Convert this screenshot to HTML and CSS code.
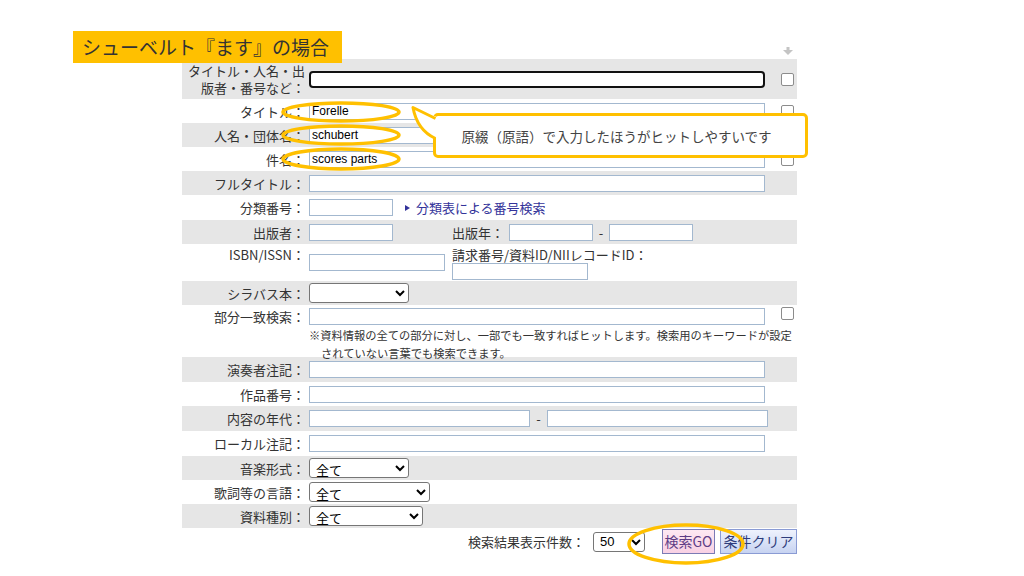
FILE: index.html
```html
<!DOCTYPE html>
<html lang="ja">
<head>
<meta charset="utf-8">
<title>シューベルト『ます』の場合</title>
<link rel="stylesheet" href="styles.css">
</head>
<body>
<div class="slide">
  <div class="form">
    <div class="topbar">
      <svg class="sort-icon" width="10" height="8" viewBox="0 0 10 8"><rect x="3.5" y="0" width="3" height="3" fill="#c4c4c4"/><polygon points="0,3 10,3 5,8" fill="#c4c4c4"/></svg>
    </div>

    <div class="row gray h40">
      <div class="lbl">タイトル・人名・出版者・番号など：</div>
      <div class="fld"><input class="txt w456 focus" type="text"></div>
      <div class="chk"><input class="cb" type="checkbox"></div>
    </div>
    <div class="row">
      <div class="lbl">タイトル：</div>
      <div class="fld"><input class="txt w456" type="text" value="Forelle"></div>
      <div class="chk"><input class="cb" type="checkbox"></div>
    </div>
    <div class="row gray">
      <div class="lbl">人名・団体名：</div>
      <div class="fld"><input class="txt w456" type="text" value="schubert"></div>
      <div class="chk"><input class="cb" type="checkbox"></div>
    </div>
    <div class="row">
      <div class="lbl">件名：</div>
      <div class="fld"><input class="txt w456" type="text" value="scores parts"></div>
      <div class="chk"><input class="cb" type="checkbox"></div>
    </div>
    <div class="row gray">
      <div class="lbl">フルタイトル：</div>
      <div class="fld"><input class="txt w456" type="text"></div>
      <div class="chk"></div>
    </div>
    <div class="row h25">
      <div class="lbl">分類番号：</div>
      <div class="fld">
        <input class="txt w84" type="text">
        <span class="link"><span class="tri"></span>分類表による番号検索</span>
      </div>
      <div class="chk"></div>
    </div>
    <div class="row gray">
      <div class="lbl">出版者：</div>
      <div class="fld">
        <input class="txt w84" type="text">
        <span class="sublbl pubyear">出版年：</span>
        <input class="txt w84" type="text">
        <span class="dash">-</span>
        <input class="txt w84" type="text">
      </div>
      <div class="chk"></div>
    </div>
    <div class="row h37 top">
      <div class="lbl pad2">ISBN/ISSN：</div>
      <div class="fld top">
        <input class="txt w136 isbn" type="text">
        <div class="callno">
          <div class="sublbl callno-lbl">請求番号/資料ID/NIIレコードID：</div>
          <input class="txt w136" type="text">
        </div>
      </div>
      <div class="chk"></div>
    </div>
    <div class="row gray">
      <div class="lbl">シラバス本：</div>
      <div class="fld"><select class="sel w100"><option></option></select></div>
      <div class="chk"></div>
    </div>
    <div class="row h52 top">
      <div class="lbl pad3">部分一致検索：</div>
      <div class="fld col">
        <input class="txt w456 mt3" type="text">
        <div class="note">
          <span class="note-line">※資料情報の全ての部分に対し、一部でも一致すればヒットします。検索用のキーワードが設定</span>
          <span class="note-line indent">されていない言葉でも検索できます。</span>
        </div>
      </div>
      <div class="chk mt2"><input class="cb" type="checkbox"></div>
    </div>
    <div class="row gray h25">
      <div class="lbl">演奏者注記：</div>
      <div class="fld"><input class="txt w456" type="text"></div>
      <div class="chk"></div>
    </div>
    <div class="row">
      <div class="lbl">作品番号：</div>
      <div class="fld"><input class="txt w456" type="text"></div>
      <div class="chk"></div>
    </div>
    <div class="row gray h25">
      <div class="lbl">内容の年代：</div>
      <div class="fld">
        <input class="txt w221" type="text">
        <span class="dash wide">-</span>
        <input class="txt w221" type="text">
      </div>
      <div class="chk"></div>
    </div>
    <div class="row h25">
      <div class="lbl">ローカル注記：</div>
      <div class="fld"><input class="txt w456" type="text"></div>
      <div class="chk"></div>
    </div>
    <div class="row gray">
      <div class="lbl">音楽形式：</div>
      <div class="fld"><select class="sel w100"><option>全て</option></select></div>
      <div class="chk"></div>
    </div>
    <div class="row">
      <div class="lbl">歌詞等の言語：</div>
      <div class="fld"><select class="sel w121"><option>全て</option></select></div>
      <div class="chk"></div>
    </div>
    <div class="row gray">
      <div class="lbl">資料種別：</div>
      <div class="fld"><select class="sel w114"><option>全て</option></select></div>
      <div class="chk"></div>
    </div>

    <div class="actions">
      <span class="count-lbl">検索結果表示件数：</span>
      <select class="sel w52"><option>50</option></select>
      <button class="btn go" type="button">検索GO</button>
      <button class="btn clear" type="button">条件クリア</button>
    </div>
  </div>

  <div class="badge">シューベルト『ます』の場合</div>
  <div class="callout">原綴（原語）で入力したほうがヒットしやすいです</div>

  <svg class="marks" width="1024" height="576" viewBox="0 0 1024 576">
    <path d="M438 117.5 L413 107.5 Q417 130 438 139 Z" fill="#ffffff"/>
    <path d="M435.5 118.5 L413 107.5 Q417 130 435.5 138.5" fill="none" stroke="#ffc000" stroke-width="3" stroke-linejoin="round"/>
    <ellipse cx="341" cy="112" rx="58" ry="9" fill="none" stroke="#ffc000" stroke-width="3.5"/>
    <ellipse cx="341" cy="135" rx="58" ry="9" fill="none" stroke="#ffc000" stroke-width="3.5"/>
    <ellipse cx="341" cy="159" rx="58" ry="10" fill="none" stroke="#ffc000" stroke-width="3.5"/>
    <ellipse cx="686" cy="544" rx="57" ry="19" fill="none" stroke="#ffc000" stroke-width="3.5"/>
  </svg>
</div>
</body>
</html>
```

FILE: styles.css
```css
html, body {
  margin: 0;
  padding: 0;
  background: #ffffff;
}

.slide {
  position: relative;
  width: 1024px;
  height: 576px;
  overflow: hidden;
  background: #ffffff;
  font-family: "Noto Sans CJK JP", "Noto Sans", sans-serif;
  color: #333333;
}

.form {
  margin-left: 182px;
  padding-top: 42px;
  width: 615px;
}

.topbar {
  height: 17px;
  display: flex;
  justify-content: flex-end;
  align-items: flex-end;
  padding-right: 4px;
  box-sizing: border-box;
  padding-bottom: 4px;
}

.sort-icon {
  display: block;
}

.row {
  display: flex;
  align-items: center;
  height: 24px;
}

.row.h25 { height: 25px; }
.row.h37 { height: 37px; }
.row.h40 { height: 40px; }
.row.h52 { height: 52px; }
.row.top { align-items: flex-start; }

.gray {
  background: #e6e6e6;
}

.lbl {
  flex: none;
  width: 123px;
  text-align: right;
  font-size: 13px;
  line-height: 17px;
  color: #333333;
}

.lbl.pad2 { padding-top: 2px; }
.lbl.pad3 { padding-top: 3px; }

.fld {
  flex: 1;
  margin-left: 4px;
  display: flex;
  align-items: center;
  min-width: 0;
}

.fld.top { align-items: flex-start; }
.fld.col { flex-direction: column; align-items: flex-start; }

.chk {
  flex: none;
  width: 22px;
  box-sizing: border-box;
  padding-left: 6px;
  display: flex;
  align-items: center;
}

.chk.mt2 { padding-top: 2px; }

.cb {
  -webkit-appearance: none;
  appearance: none;
  width: 13px;
  height: 13px;
  margin: 0;
  border: 1px solid #8c8c8c;
  border-radius: 2px;
  background: #ffffff;
  box-sizing: border-box;
}

.txt {
  box-sizing: border-box;
  height: 17px;
  margin: 0;
  padding: 0 2px;
  border: 1px solid #a3b8cf;
  background: #ffffff;
  font-family: "Liberation Sans", Arial, sans-serif;
  font-size: 12px;
  color: #000000;
}

.txt.focus {
  border: 2px solid #111111;
  border-radius: 4px;
}

.txt.mt3 { margin-top: 3px; }
.txt.isbn { margin-top: 10px; }

.w84 { width: 84px; }
.w136 { width: 136px; }
.w221 { width: 221px; }
.w456 { width: 456px; }

.link {
  margin-left: 12px;
  display: flex;
  align-items: center;
  font-size: 13px;
  line-height: 17px;
  color: #33339a;
}

.tri {
  display: inline-block;
  width: 0;
  height: 0;
  border-left: 5px solid #33339a;
  border-top: 3.5px solid transparent;
  border-bottom: 3.5px solid transparent;
  margin-right: 6px;
}

.sublbl {
  font-size: 13px;
  line-height: 17px;
  color: #333333;
}

.pubyear {
  margin-left: 59px;
  width: 57px;
}

.dash {
  width: 16px;
  text-align: center;
  font-size: 13px;
  line-height: 17px;
  color: #333333;
}

.dash.wide { width: 17px; }

.callno {
  margin-left: 7px;
  display: flex;
  flex-direction: column;
}

.callno-lbl {
  padding-top: 3px;
  line-height: 16px;
  white-space: nowrap;
}

.note {
  margin-top: 1px;
  font-size: 11.25px;
  line-height: 18px;
  color: #333333;
  white-space: nowrap;
}

.note-line {
  display: block;
}

.note-line.indent {
  padding-left: 12px;
}

.sel {
  box-sizing: border-box;
  height: 20px;
  margin: 0;
  padding: 0 2px;
  border: 1px solid #767676;
  border-radius: 3px;
  background-color: #ffffff;
  font-family: "Noto Sans CJK JP", "Noto Sans", sans-serif;
  font-size: 13px;
  color: #000000;
}

.w52 { width: 52px; font-family: "Liberation Sans", Arial, sans-serif; }
.w100 { width: 100px; }
.w114 { width: 114px; }
.w121 { width: 121px; }

.actions {
  display: flex;
  justify-content: flex-end;
  align-items: center;
  height: 27px;
}

.count-lbl {
  font-size: 13px;
  line-height: 17px;
  color: #333333;
  margin-right: 8px;
}

.btn {
  box-sizing: border-box;
  height: 25px;
  margin: 0;
  padding: 0;
  font-family: "Noto Sans CJK JP", "Noto Sans", sans-serif;
  font-size: 14px;
  line-height: 21px;
  cursor: pointer;
}

.btn.go {
  width: 53px;
  margin-left: 17px;
  border: 1px solid #7b7bb5;
  background: linear-gradient(#fde8f2, #f8d0e4);
  color: #5e3d86;
}

.btn.clear {
  width: 77px;
  margin-left: 5px;
  border: 1px solid #8a9bd4;
  background: linear-gradient(#eef2fd, #c7d3f1);
  color: #2f3d7c;
}

.badge {
  position: absolute;
  left: 73px;
  top: 31px;
  width: 269px;
  height: 32px;
  box-sizing: border-box;
  padding-left: 9px;
  background: #ffc000;
  font-size: 19px;
  line-height: 32px;
  color: #333333;
  white-space: nowrap;
}

.callout {
  position: absolute;
  left: 433px;
  top: 113px;
  width: 375px;
  height: 45px;
  box-sizing: border-box;
  border: 3px solid #ffc000;
  border-radius: 5px;
  background: #ffffff;
  display: flex;
  align-items: center;
  justify-content: center;
  padding-right: 8px;
  font-size: 13.5px;
  line-height: 18px;
  color: #444444;
  white-space: nowrap;
}

.marks {
  position: absolute;
  left: 0;
  top: 0;
  pointer-events: none;
}
```
